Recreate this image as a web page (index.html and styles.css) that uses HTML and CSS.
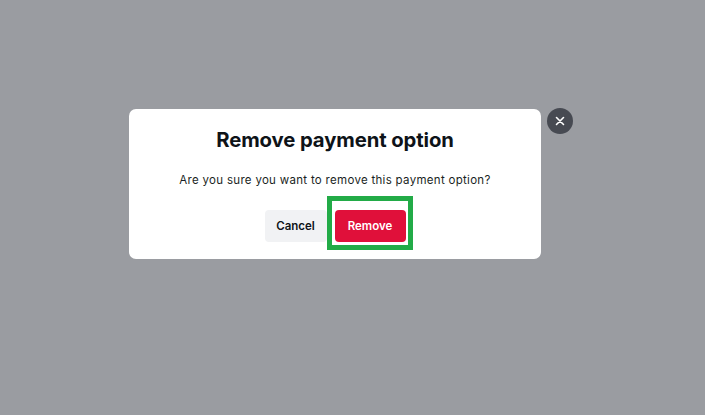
FILE: index.html
```html
<!DOCTYPE html>
<html lang="en">
<head>
<meta charset="utf-8">
<title>Remove payment option</title>
<link rel="stylesheet" href="styles.css">
</head>
<body>
<div class="overlay">
  <div class="dialog">
    <h1 class="title">Remove payment option</h1>
    <p class="message">Are you sure you want to remove this payment option?</p>
    <div class="actions">
      <button class="btn btn-cancel" type="button">Cancel</button>
      <button class="btn btn-remove" type="button">Remove<span class="highlight"></span></button>
    </div>
    <button class="close" type="button" aria-label="Close">
      <svg width="10" height="10" viewBox="0 0 10 10"><path d="M1.5 1.5 L8.5 8.5 M8.5 1.5 L1.5 8.5" stroke="#fff" stroke-width="1.6" stroke-linecap="round"/></svg>
    </button>
  </div>
</div>
</body>
</html>
```
FILE: styles.css
```css
html, body {
  margin: 0;
  padding: 0;
  height: 100%;
}
body {
  background: #9a9ca1;
  font-family: "Inter", "Open Sans", sans-serif;
}
.overlay {
  padding: 109px 0 0 129px;
}
.dialog {
  position: relative;
  box-sizing: border-box;
  width: 412px;
  height: 150px;
  background: #fff;
  border-radius: 7px;
  padding: 17px 24px 18px;
  display: flex;
  flex-direction: column;
  align-items: center;
}
.title {
  margin: 0;
  font-size: 20.3px;
  line-height: 28px;
  font-weight: 700;
  color: #0e1318;
  letter-spacing: -0.1px;
}
.message {
  margin: 18px 0 0;
  font-size: 11.5px;
  line-height: 16px;
  color: #1a1f24;
  letter-spacing: 0.3px;
}
.actions {
  margin-top: 22px;
  display: flex;
  align-items: center;
  gap: 8px;
}
.btn {
  border: 0;
  border-radius: 4px;
  height: 32px;
  font-family: inherit;
  font-size: 11.5px;
  font-weight: 600;
  padding: 0;
  cursor: pointer;
}
.btn-cancel {
  width: 62px;
  background: #f1f2f4;
  color: #0e1318;
}
.btn-remove {
  position: relative;
  width: 71px;
  background: #e0103a;
  color: #fff;
}
.highlight {
  position: absolute;
  left: -8px;
  right: -7px;
  top: -14px;
  bottom: -8px;
  border: 5px solid #22ab47;
  pointer-events: none;
}
.close {
  position: absolute;
  left: 418px;
  top: -1px;
  width: 26px;
  height: 26px;
  border-radius: 50%;
  border: 0;
  padding: 0;
  background: #474a52;
  display: flex;
  align-items: center;
  justify-content: center;
}
```
